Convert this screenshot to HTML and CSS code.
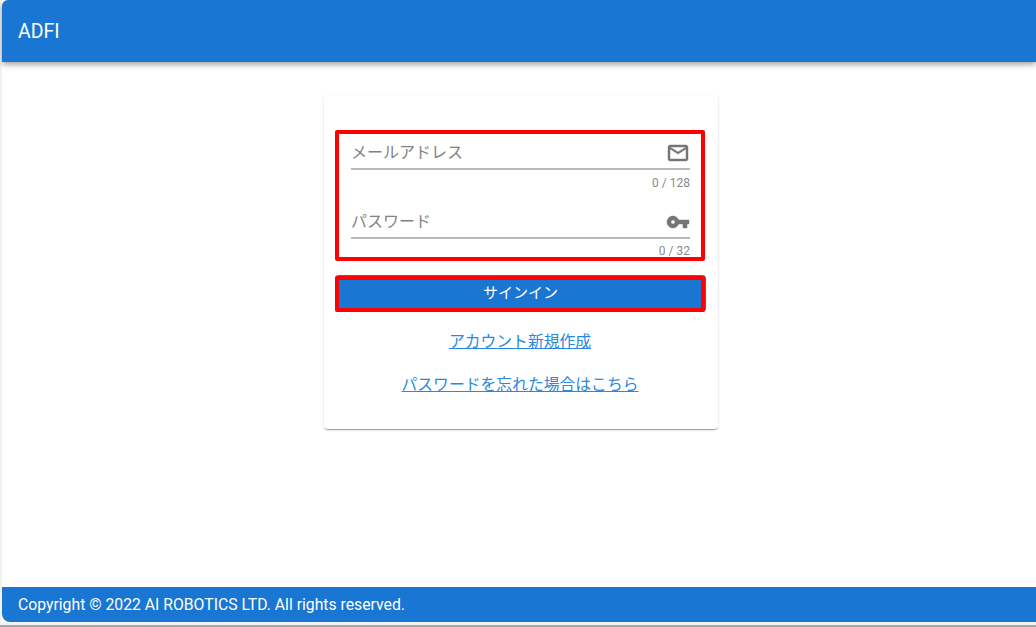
FILE: index.html
```html
<!DOCTYPE html>
<html lang="ja">
<head>
<meta charset="utf-8">
<title>ADFI</title>
<link rel="stylesheet" href="styles.css">
</head>
<body>
<div class="app">
  <header class="topbar">ADFI</header>
  <main class="content">
    <section class="card">
      <div class="fields">
        <div class="field">
          <div class="input-row">
            <span class="placeholder">メールアドレス</span>
            <svg class="icon" viewBox="0 0 24 24" width="24" height="24"><path d="M22 6c0-1.100-.9-2-2-2H4c-1.100 0-2 .9-2 2v12c0 1.100.9 2 2 2h16c1.100 0 2-.9 2-2V6zm-2 0-8 5-8-5h16zm0 12H4V8l8 5 8-5v10z"/></svg>
          </div>
          <div class="counter">0 / 128</div>
        </div>
        <div class="field field-second">
          <div class="input-row">
            <span class="placeholder">パスワード</span>
            <svg class="icon" viewBox="0 0 24 24" width="24" height="24"><path d="M12.650 10C11.830 7.670 9.610 6 7 6c-3.310 0-6 2.690-6 6s2.690 6 6 6c2.610 0 4.830-1.670 5.650-4H17v4h4v-4h2v-4H12.650zM7 14c-1.100 0-2-.9-2-2s.9-2 2-2 2 .9 2 2-.9 2-2 2z"/></svg>
          </div>
          <div class="counter">0 / 32</div>
        </div>
        <div class="mark"></div>
      </div>
      <div class="button-wrap">
        <button class="signin" type="button">サインイン</button>
        <div class="mark mark-button"></div>
      </div>
      <a class="link link-first" href="#">アカウント新規作成</a>
      <a class="link link-second" href="#">パスワードを忘れた場合はこちら</a>
    </section>
  </main>
  <footer class="bottombar">Copyright © 2022 AI ROBOTICS LTD. All rights reserved.</footer>
</div>
<div class="edge"></div>
</body>
</html>
```
FILE: styles.css
```css
* { box-sizing: border-box; }
html, body { margin: 0; height: 100%; overflow: hidden; }
body {
  display: flex;
  flex-direction: column;
  background: #f2f2f2;
  font-family: Roboto, "Noto Sans CJK JP", sans-serif;
}
.app {
  flex: 1;
  min-height: 0;
  display: flex;
  flex-direction: column;
  margin-left: 2px;
  background: #fff;
}
.edge { height: 5px; flex: none; background: linear-gradient(#f2f2f2 0 3px, #a8a8a8 3px); }
.topbar {
  flex: none;
  height: 62px;
  padding: 1px 0 0 16px;
  display: flex;
  align-items: center;
  background: #1976d2;
  color: #fff;
  font-size: 19.5px;
  font-weight: 400;
  line-height: 1;
  border-top-left-radius: 6px;
  box-shadow: 0 2px 4px -1px rgba(0,0,0,.2), 0 4px 5px rgba(0,0,0,.14), 0 1px 10px rgba(0,0,0,.12);
  position: relative;
}
.content {
  flex: 1;
  min-height: 0;
  padding: 33px 0 0 4px;
  display: flex;
  justify-content: center;
}
.card {
  width: 394px;
  height: 334px;
  padding: 35px 13px 0 11px;
  display: flex;
  flex-direction: column;
  align-items: center;
  background: #fff;
  border-radius: 4px;
  box-shadow: 0 2px 1px -1px rgba(0,0,0,.2), 0 1px 1px rgba(0,0,0,.14), 0 1px 3px rgba(0,0,0,.12);
}
.fields {
  position: relative;
  align-self: flex-start;
  width: 370px;
  height: 131px;
  padding: 0 15px 0 16px;
}
.field { height: 70px; padding-top: 8px; }
.field-second { height: 61px; padding-top: 7px; }
.input-row {
  height: 32px;
  display: flex;
  justify-content: space-between;
  align-items: center;
  border-bottom: 2px solid #b9b9b9;
}
.placeholder { font-size: 16px; color: #828282; line-height: 24px; }
.icon { flex: none; fill: #757575; stroke: #757575; stroke-width: .45; }
.counter {
  margin-top: 6px;
  text-align: right;
  font-size: 12px;
  line-height: 14px;
  color: #8a8a8a;
}
.field-second .counter { margin-top: 5px; }
.mark { position: absolute; inset: 0; border: 4px solid #f00; border-radius: 2px; pointer-events: none; }
.mark-button { inset: 1px 1px 0 0; }
.button-wrap { position: relative; align-self: flex-start; width: 371px; height: 37px; margin-top: 14px; }
.signin {
  display: block;
  width: 100%;
  height: 100%;
  padding: 0;
  border: 0;
  border-radius: 4px;
  background: #1976d2;
  color: #fff;
  font: 400 15px/1 Roboto, "Noto Sans CJK JP", sans-serif;
}
.link {
  font-size: 15.8px;
  line-height: 24px;
  color: #2a88e0;
  text-decoration: underline;
}
.link-first { margin-top: 18px; }
.link-second { margin-top: 19px; }
.bottombar {
  flex: none;
  height: 35px;
  padding-left: 16px;
  display: flex;
  align-items: center;
  background: #1976d2;
  color: #fff;
  font-size: 15.75px;
  border-bottom-left-radius: 8px;
}
```
